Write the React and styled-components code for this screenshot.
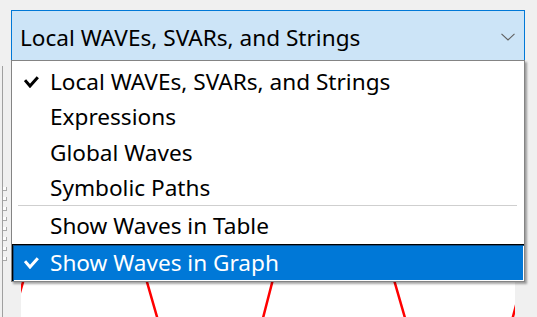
import React from "react";
import styled, { createGlobalStyle } from "styled-components";

const GlobalStyle = createGlobalStyle`
  html, body {
    margin: 0;
    padding: 0;
    background: #f0f0f0;
  }
  body {
    font-family: "Noto Sans", "Open Sans", sans-serif;
  }
`;

const Page = styled.div`
  width: 537px;
  height: 317px;
  overflow: hidden;
  display: flex;
  flex-direction: column;
  background: #f0f0f0;
`;

const Toolbar = styled.div`
  padding: 10px 0 0 11px;
  position: relative;
  z-index: 2;
`;

const ComboWrap = styled.div`
  position: relative;
  width: 514px;
`;

const Combo = styled.div`
  box-sizing: border-box;
  height: 50px;
  border: 1px solid #0078d7;
  border-bottom: none;
  background: #cce4f7;
  display: flex;
  align-items: center;
  justify-content: space-between;
  padding: 3px 9px 0 8px;
  font-size: 22.6px;
  color: #000;
`;

const Menu = styled.div`
  position: absolute;
  top: 100%;
  left: 0;
  width: 100%;
  box-sizing: border-box;
  background: #fff;
  border: 1px solid #848484;
  box-shadow: 2px 2px 2px rgba(0, 0, 0, 0.35);
  padding-top: 3px;
  display: flex;
  flex-direction: column;
`;

const Item = styled.div`
  display: flex;
  align-items: center;
  height: ${(p) => p.$h}px;
  font-size: 22.6px;
  color: ${(p) => (p.$active ? "#fff" : "#000")};
  background: ${(p) => (p.$active ? "#0078d7" : "transparent")};
  box-shadow: ${(p) =>
    p.$active
      ? "inset 1px 1px 0 #000, inset 2px 2px 0 #0b4d86, inset -1px -1px 0 #fff"
      : "none"};
`;

const CheckCell = styled.span`
  width: 38px;
  flex: none;
  display: flex;
  align-items: center;
  padding-left: 12px;
  box-sizing: border-box;
`;

const Separator = styled.div`
  height: 2px;
  margin: 0 7px 0 6px;
  border-top: 1px solid #cfcfcf;
  box-sizing: border-box;
`;

const Body = styled.div`
  flex: 1;
  display: flex;
  margin-top: 6px;
`;

const Rail = styled.div`
  width: 21px;
  flex: none;
  position: relative;
  box-sizing: border-box;
  display: flex;
  flex-direction: column;
  align-items: flex-start;
  padding: 121px 0 0 3px;
  gap: 6px;
  &::before {
    content: "";
    position: absolute;
    left: 2px;
    top: 0;
    bottom: 0;
    width: 1px;
    background: #a0a0a0;
  }
`;

const GripDot = styled.span`
  width: 3px;
  height: 3px;
  background: #fdfdfd;
  border-right: 1px solid #a9a9a9;
  border-bottom: 1px solid #a9a9a9;
`;

const Graph = styled.div`
  width: 494px;
  flex: none;
  background: #fff;
  overflow: hidden;
`;

const Gutter = styled.div`
  flex: 1;
`;

const Check = ({ color }) => (
  <svg width="15" height="12" viewBox="0 0 15 12">
    <path
      d="M1 4.2 L6 10 L13.8 1.2"
      fill="none"
      stroke={color}
      strokeWidth="3"
      strokeLinejoin="miter"
    />
  </svg>
);

const Chevron = () => (
  <svg width="14" height="8" viewBox="0 0 14 8">
    <path d="M0.5 0.8 L7 7 L13.5 0.8" fill="none" stroke="#606060" strokeWidth="1.1" />
  </svg>
);

const items = [
  { label: "Local WAVEs, SVARs, and Strings", checked: true, h: 35.25 },
  { label: "Expressions", h: 35.25 },
  { label: "Global Waves", h: 35.25 },
  { label: "Symbolic Paths", h: 35.25 },
  { sep: true },
  { label: "Show Waves in Table", h: 37 },
  { label: "Show Waves in Graph", checked: true, active: true, h: 37 },
];

// wave in page coordinates, shifted into the graph panel (x-21, y-66)
const wave = [
  [17, 303],
  [85, 66],
  [213, 512],
  [330, 58],
  [461, 512],
  [560, 140],
]
  .map(([x, y]) => `${x - 21},${y - 66}`)
  .join(" ");

export default function App() {
  return (
    <Page>
      <GlobalStyle />
      <Toolbar>
        <ComboWrap>
          <Combo>
            <span>Local WAVEs, SVARs, and Strings</span>
            <Chevron />
          </Combo>
          <Menu>
            {items.map((it, i) =>
              it.sep ? (
                <Separator key={i} />
              ) : (
                <Item key={i} $h={it.h} $active={it.active}>
                  <CheckCell>
                    {it.checked && <Check color={it.active ? "#fff" : "#000"} />}
                  </CheckCell>
                  {it.label}
                </Item>
              )
            )}
          </Menu>
        </ComboWrap>
      </Toolbar>
      <Body>
        <Rail>
          {Array.from({ length: 8 }).map((_, i) => (
            <GripDot key={i} />
          ))}
        </Rail>
        <Graph>
          <svg width="494" height="260">
            <polyline points={wave} fill="none" stroke="#ff0000" strokeWidth="2.5" />
          </svg>
        </Graph>
        <Gutter />
      </Body>
    </Page>
  );
}
